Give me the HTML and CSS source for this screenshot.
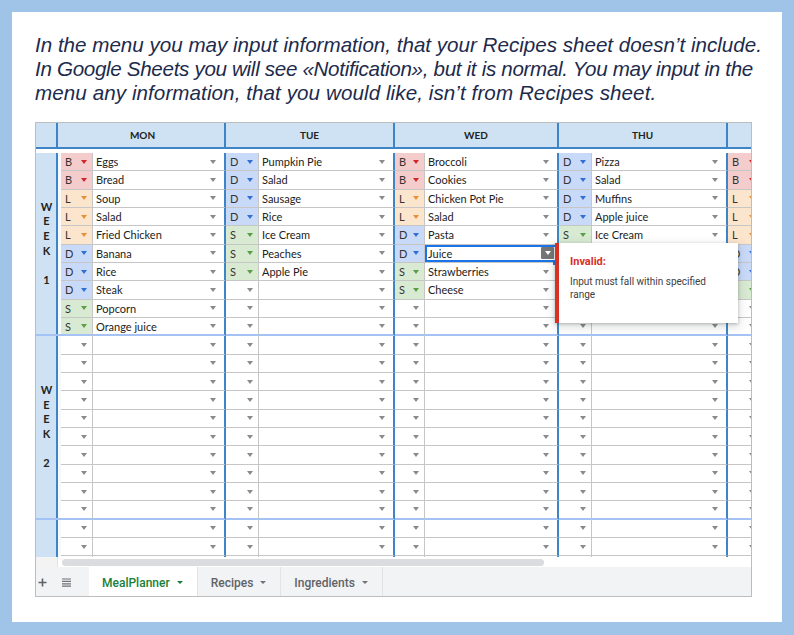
FILE: index.html
```html
<!DOCTYPE html>
<html>
<head>
<meta charset="utf-8">
<link rel="stylesheet" href="styles.css">
</head>
<body>
<div class="panel">
  <p class="intro">In the menu you may input information, that your Recipes sheet doesn’t include.<br><span class="tight">In Google Sheets you will see «Notification», but it is normal. You may input in the</span><br><span class="loose">menu any information, that you would like, isn’t from Recipes sheet.</span></p>
  <div class="sheet">
    <div class="grid">
      <div class="hd corner"></div>
      <div class="hd day">MON</div>
      <div class="hd day">TUE</div>
      <div class="hd day">WED</div>
      <div class="hd day">THU</div>
      <div class="hd last"></div>
      <div class="gap"></div>

      <div class="row"><div class="week">W<br>E<br>E<br>K<br><br>1</div><span class="t b">B</span><span class="n">Eggs</span><span class="t d">D</span><span class="n">Pumpkin Pie</span><span class="t b">B</span><span class="n">Broccoli</span><span class="t d">D</span><span class="n">Pizza</span><span class="t b">B</span></div>
      <div class="row"><span class="t b">B</span><span class="n">Bread</span><span class="t d">D</span><span class="n">Salad</span><span class="t b">B</span><span class="n">Cookies</span><span class="t d">D</span><span class="n">Salad</span><span class="t b">B</span></div>
      <div class="row"><span class="t l">L</span><span class="n">Soup</span><span class="t d">D</span><span class="n">Sausage</span><span class="t l">L</span><span class="n">Chicken Pot Pie</span><span class="t d">D</span><span class="n">Muffins</span><span class="t l">L</span></div>
      <div class="row"><span class="t l">L</span><span class="n">Salad</span><span class="t d">D</span><span class="n">Rice</span><span class="t l">L</span><span class="n">Salad</span><span class="t d">D</span><span class="n">Apple juice</span><span class="t l">L</span></div>
      <div class="row"><span class="t l">L</span><span class="n">Fried Chicken</span><span class="t s">S</span><span class="n">Ice Cream</span><span class="t d">D</span><span class="n">Pasta</span><span class="t s">S</span><span class="n">Ice Cream</span><span class="t l">L</span></div>
      <div class="row"><span class="t d">D</span><span class="n">Banana</span><span class="t s">S</span><span class="n">Peaches</span><span class="t d">D</span><span class="n sel">Juice<span class="dd"></span></span><span class="t"></span><span class="n"></span><span class="t d">D</span></div>
      <div class="row"><span class="t d">D</span><span class="n">Rice</span><span class="t s">S</span><span class="n">Apple Pie</span><span class="t s">S</span><span class="n">Strawberries</span><span class="t"></span><span class="n"></span><span class="t d">D</span></div>
      <div class="row"><span class="t d">D</span><span class="n">Steak</span><span class="t"></span><span class="n"></span><span class="t s">S</span><span class="n">Cheese</span><span class="t"></span><span class="n"></span><span class="t s">S</span></div>
      <div class="row"><span class="t s">S</span><span class="n">Popcorn</span><span class="t"></span><span class="n"></span><span class="t"></span><span class="n"></span><span class="t"></span><span class="n"></span><span class="t"></span></div>
      <div class="row end"><span class="t s">S</span><span class="n">Orange juice</span><span class="t"></span><span class="n"></span><span class="t"></span><span class="n"></span><span class="t"></span><span class="n"></span><span class="t"></span></div>

      <div class="row"><div class="week">W<br>E<br>E<br>K<br><br>2</div><span class="t"></span><span class="n"></span><span class="t"></span><span class="n"></span><span class="t"></span><span class="n"></span><span class="t"></span><span class="n"></span><span class="t"></span></div>
      <div class="row"><span class="t"></span><span class="n"></span><span class="t"></span><span class="n"></span><span class="t"></span><span class="n"></span><span class="t"></span><span class="n"></span><span class="t"></span></div>
      <div class="row"><span class="t"></span><span class="n"></span><span class="t"></span><span class="n"></span><span class="t"></span><span class="n"></span><span class="t"></span><span class="n"></span><span class="t"></span></div>
      <div class="row"><span class="t"></span><span class="n"></span><span class="t"></span><span class="n"></span><span class="t"></span><span class="n"></span><span class="t"></span><span class="n"></span><span class="t"></span></div>
      <div class="row"><span class="t"></span><span class="n"></span><span class="t"></span><span class="n"></span><span class="t"></span><span class="n"></span><span class="t"></span><span class="n"></span><span class="t"></span></div>
      <div class="row"><span class="t"></span><span class="n"></span><span class="t"></span><span class="n"></span><span class="t"></span><span class="n"></span><span class="t"></span><span class="n"></span><span class="t"></span></div>
      <div class="row"><span class="t"></span><span class="n"></span><span class="t"></span><span class="n"></span><span class="t"></span><span class="n"></span><span class="t"></span><span class="n"></span><span class="t"></span></div>
      <div class="row"><span class="t"></span><span class="n"></span><span class="t"></span><span class="n"></span><span class="t"></span><span class="n"></span><span class="t"></span><span class="n"></span><span class="t"></span></div>
      <div class="row"><span class="t"></span><span class="n"></span><span class="t"></span><span class="n"></span><span class="t"></span><span class="n"></span><span class="t"></span><span class="n"></span><span class="t"></span></div>
      <div class="row end"><span class="t"></span><span class="n"></span><span class="t"></span><span class="n"></span><span class="t"></span><span class="n"></span><span class="t"></span><span class="n"></span><span class="t"></span></div>

      <div class="row"><div class="week"></div><span class="t"></span><span class="n"></span><span class="t"></span><span class="n"></span><span class="t"></span><span class="n"></span><span class="t"></span><span class="n"></span><span class="t"></span></div>
      <div class="row"><span class="t"></span><span class="n"></span><span class="t"></span><span class="n"></span><span class="t"></span><span class="n"></span><span class="t"></span><span class="n"></span><span class="t"></span></div>
      <div class="row"><span class="t"></span><span class="n"></span><span class="t"></span><span class="n"></span><span class="t"></span><span class="n"></span><span class="t"></span><span class="n"></span><span class="t"></span></div>
    </div>

    <div class="scroll"><div class="scroll-corner"></div><div class="thumb"></div></div>

    <div class="tabs">
      <svg class="add" width="9" height="9" viewBox="0 0 9 9"><path d="M4.5 0.5V8.5M0.5 4.5H8.5" stroke="#5f6368" stroke-width="1.6"/></svg>
      <svg class="list" width="9" height="9" viewBox="0 0 9 9"><path d="M0 1H9M0 3.4H9M0 5.8H9M0 8.2H9" stroke="#6f7377" stroke-width="1.2"/></svg>
      <div class="tab active">MealPlanner<span class="caret"></span></div>
      <div class="tab">Recipes<span class="caret"></span></div>
      <div class="tab">Ingredients<span class="caret"></span></div>
    </div>

    <div class="tip">
      <div class="tip-title">Invalid:</div>
      <div class="tip-text">Input must fall within specified range</div>
    </div>
  </div>
</div>
</body>
</html>
```

FILE: styles.css
```css
* { box-sizing: border-box; }

body {
  margin: 0;
  background: #9fc4e7;
  width: 794px;
  height: 635px;
  overflow: hidden;
}

.panel {
  margin: 12px 0 0 12px;
  width: 770px;
  height: 610px;
  background: #ffffff;
  padding: 21px 0 0 23px;
}

.intro {
  margin: 0;
  font-family: "Liberation Sans", Arial, sans-serif;
  font-style: italic;
  font-size: 20.6px;
  line-height: 24px;
  color: #1d2b4c;
  white-space: nowrap;
}
.tight { letter-spacing: -0.32px; }
.loose { letter-spacing: 0.08px; }

.sheet {
  position: relative;
  margin-top: 17px;
  width: 717px;
  height: 475px;
  border: 1px solid #bdbdbd;
  overflow: hidden;
  font-family: Lato, "Open Sans", sans-serif;
}

.grid {
  display: grid;
  grid-template-columns: 25px 32px 133px 33px 136px 30px 134px 33px 136px 33px;
  grid-template-rows: 26px 4px;
  grid-auto-rows: 18.33px;
  height: 434px;
  overflow: hidden;
}

.hd {
  background: #cfe2f3;
  border-bottom: 2px solid #3d85c6;
  border-right: 2px solid #3d85c6;
  display: flex;
  align-items: center;
  justify-content: center;
  font-weight: 700;
  font-size: 10px;
  color: #222;
}
.corner {
  border-right: none;
  background: linear-gradient(to right, #cfe2f3 20px, #3d85c6 20px, #3d85c6 22px, #cfe2f3 22px);
}
.day { grid-column: span 2; }
.last { border-right: none; }

.gap { grid-column: 1 / -1; background: #fff; }

.row { display: contents; }

.week {
  grid-row: span 10;
  background: linear-gradient(to right, #cfe2f3 20px, #3d85c6 20px, #3d85c6 22px, #f7f9fb 22px);
  border-bottom: 2px solid #a4c2f4;
  display: flex;
  align-items: center;
  justify-content: center;
  padding-right: 4px;
  text-align: center;
  font-weight: 700;
  font-size: 11px;
  line-height: 14.6px;
  color: #222;
}

.t, .n {
  display: flex;
  align-items: center;
  justify-content: space-between;
  border-bottom: 1px solid #c6c6c6;
  font-size: 11px;
  white-space: nowrap;
  overflow: hidden;
}
.t {
  padding: 0 5px 0 4px;
  border-right: 1px solid #c6c6c6;
  color: #333;
  background: #fff;
}
.n {
  padding: 0 8px 0 3px;
  border-right: 2px solid #3d85c6;
  color: #222;
  background: #fff;
}
.t::after, .n::after {
  content: "";
  margin-left: auto;
  border-left: 3.5px solid transparent;
  border-right: 3.5px solid transparent;
  border-top: 4px solid #8a8a8a;
}
.t.b { background: #f4cccc; }
.t.b::after { border-top-color: #d0262c; }
.t.l { background: #fce5cd; }
.t.l::after { border-top-color: #e69138; }
.t.d { background: #c9daf8; }
.t.d::after { border-top-color: #2f6fd6; }
.t.s { background: #d9ead3; }
.t.s::after { border-top-color: #5a9e45; }

.row.end > * { border-bottom: 2px solid #a4c2f4; }

.n.sel {
  position: relative;
  overflow: visible;
  box-shadow: inset 0 0 0 2px #1a73e8;
}
.n.sel::after { content: none; }
.n.sel::before {
  content: "";
  position: absolute;
  right: -1px;
  bottom: -3px;
  width: 5px;
  height: 5px;
  background: #1a73e8;
}
.dd {
  margin-right: -5px;
  width: 13px;
  height: 12px;
  background: #757575;
  border-radius: 1px;
  display: flex;
  align-items: center;
  justify-content: center;
}
.dd::after {
  content: "";
  border-left: 3.5px solid transparent;
  border-right: 3.5px solid transparent;
  border-top: 4px solid #fff;
}

.scroll {
  height: 10px;
  display: flex;
  background: #fff;
}
.scroll-corner {
  width: 22px;
  background: #f3f3f3;
  border-right: 1px solid #e3e3e3;
}
.thumb {
  margin: 2px 0 0 4px;
  width: 482px;
  height: 7px;
  border-radius: 4px;
  background: #dadce0;
}

.tabs {
  height: 29px;
  display: flex;
  align-items: stretch;
  background: #f1f3f4;
  padding-left: 2px;
  font-family: Roboto, "Open Sans", sans-serif;
  font-size: 12px;
  font-weight: 500;
  color: #5f6368;
}
.add { align-self: center; margin-top: 2px; margin-right: 15px; }
.list { align-self: center; margin-top: 2px; margin-right: 18px; }

.tab {
  display: flex;
  align-items: center;
  gap: 7px;
  padding: 2px 14px 0 13px;
  border-right: 1px solid #e2e3e5;
}
.tab.active {
  background: #fff;
  color: #188038;
}
.caret {
  border-left: 3.5px solid transparent;
  border-right: 3.5px solid transparent;
  border-top: 3.5px solid #6f7377;
}
.tab.active .caret { border-top-color: #188038; }

.tip {
  position: absolute;
  left: 519px;
  top: 120px;
  width: 183px;
  height: 80px;
  background: #fff;
  border-left: 4px solid #d93025;
  box-shadow: 0 1px 3px rgba(60, 64, 67, 0.3), 0 3px 8px 2px rgba(60, 64, 67, 0.15);
  padding: 12px 12px 0 11px;
  font-family: Roboto, "Open Sans", sans-serif;
}
.tip-title {
  color: #d93025;
  font-weight: 700;
  font-size: 11px;
  line-height: 13px;
  margin-bottom: 7px;
}
.tip-text {
  font-size: 10px;
  line-height: 13px;
  color: #3c4043;
}
```
